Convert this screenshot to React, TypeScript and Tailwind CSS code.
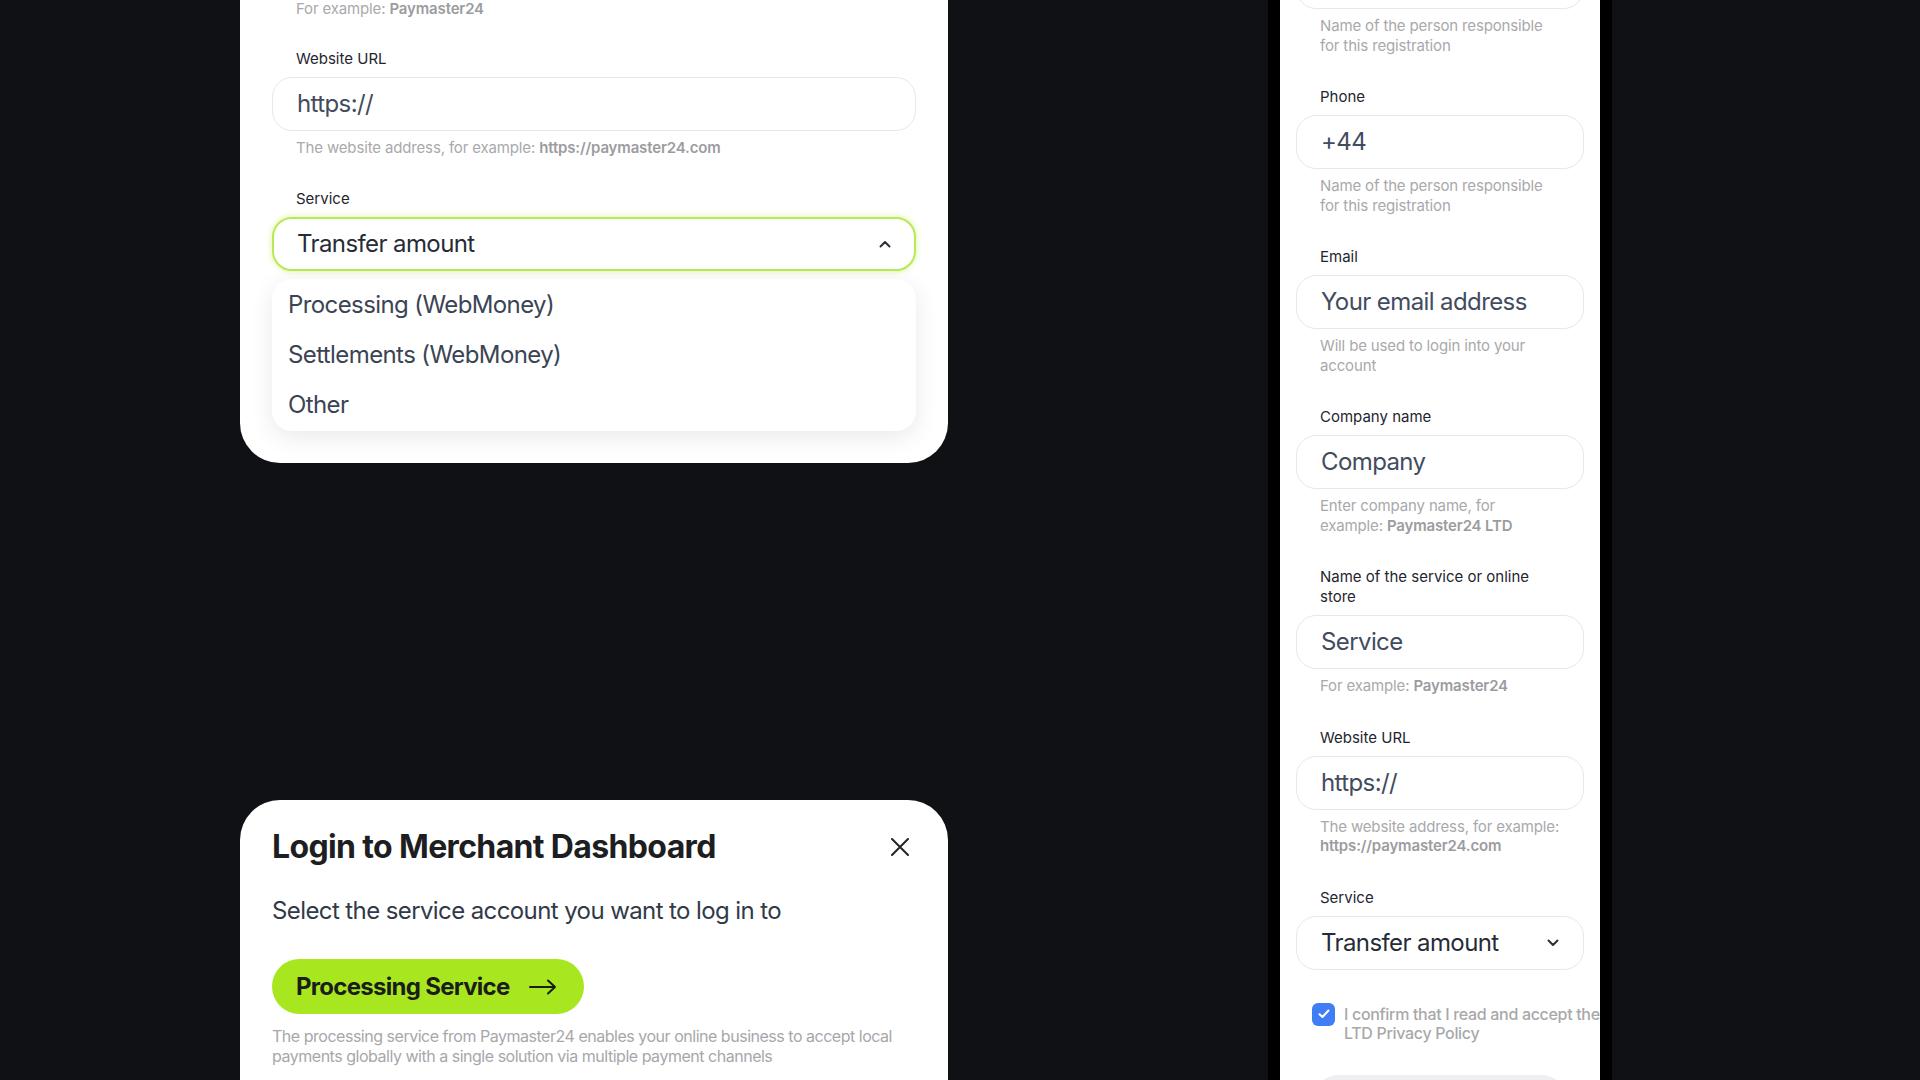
import type { ReactNode } from "react";

function Label({ children }: { children: ReactNode }) {
    return <div className="px-6 text-[15px] leading-5 text-[#1f2530]">{children}</div>;
}

function Hint({ children, first }: { children: ReactNode; first?: boolean }) {
    return (
        <div
            className={`${first ? "" : "mt-[7px]"} whitespace-nowrap px-6 text-[15px] leading-[19.5px] tracking-[-0.01em] text-[#a9a9ac]`}
        >
            {children}
        </div>
    );
}

function Em({ children }: { children: ReactNode }) {
    return <span className="font-semibold text-[#9c9c9f]">{children}</span>;
}

function Input({ value, noTop }: { value: string; noTop?: boolean }) {
    return (
        <div
            className={`${noTop ? "" : "mt-2"} flex h-[54px] items-center rounded-[20px] border border-[#e8e8eb] bg-white px-6 text-[24px] tracking-tight text-[#424c5e]`}
        >
            {value}
        </div>
    );
}

function Chevron({ up }: { up?: boolean }) {
    return (
        <svg width="12" height="8" viewBox="0 0 12 8" fill="none" className="shrink-0">
            <path
                d={up ? "M1.5 6.5 6 2l4.5 4.5" : "M1.5 1.5 6 6l4.5-4.5"}
                stroke="#2a303a"
                strokeWidth="2"
                strokeLinecap="round"
                strokeLinejoin="round"
            />
        </svg>
    );
}

function Select({ value, open }: { value: string; open?: boolean }) {
    return (
        <div
            className={
                open
                    ? "mt-2 flex h-[54px] items-center justify-between rounded-[20px] border-2 border-[#b9ea55] bg-white pl-[23px] pr-[23px] text-[24px] tracking-tight text-[#262c37] shadow-[0_0_6px_rgba(170,230,40,0.45)]"
                    : "mt-2 flex h-[54px] items-center justify-between rounded-[20px] border border-[#e8e8eb] bg-white pl-6 pr-[24px] text-[24px] tracking-tight text-[#262c37]"
            }
        >
            <span>{value}</span>
            <Chevron up={open} />
        </div>
    );
}

function Group({ children, first }: { children: ReactNode; first?: boolean }) {
    return <div className={first ? "" : "mt-8"}>{children}</div>;
}

function TopCard() {
    return (
        <div className="w-[708px] shrink-0 rounded-b-[40px] bg-white px-8 pb-8">
            <div className="-mt-px">
                <Hint first>
                    For example: <Em>Paymaster24</Em>
                </Hint>
            </div>
            <div className="-mt-[2px]">
                <Group>
                    <Label>Website URL</Label>
                    <Input value="https://" />
                    <Hint>
                        The website address, for example: <Em>https://paymaster24.com</Em>
                    </Hint>
                </Group>
            </div>
            <Group>
                <Label>Service</Label>
                <Select value="Transfer amount" open />
                <div className="mt-2 rounded-[20px] bg-white py-[1px] shadow-[0_6px_24px_rgba(0,0,0,0.09)]">
                    {["Processing (WebMoney)", "Settlements (WebMoney)", "Other"].map((o) => (
                        <div key={o} className="flex h-[50px] items-center px-4 text-[24px] tracking-tight text-[#3b4454]">
                            {o}
                        </div>
                    ))}
                </div>
            </Group>
        </div>
    );
}

function LoginCard() {
    return (
        <div className="mt-[337px] h-[320px] w-[708px] shrink-0 rounded-t-[40px] bg-white px-8 pt-[27px]">
            <div className="flex items-center justify-between">
                <h1 className="text-[32px] font-bold leading-10 tracking-[-0.02em] text-[#1d1e22]">
                    Login to Merchant Dashboard
                </h1>
                <svg width="18" height="18" viewBox="0 0 18 18" className="mr-[7px]">
                    <path d="M1 1l16 16M17 1 1 17" stroke="#22252b" strokeWidth="2" strokeLinecap="round" />
                </svg>
            </div>
            <p className="mt-7 text-[24px] leading-8 tracking-tight text-[#313a48]">
                Select the service account you want to log in to
            </p>
            <button className="mt-8 flex h-[55px] w-[312px] items-center gap-[19px] rounded-full bg-[#a8e61f] pl-6 text-[24px] font-bold tracking-[-0.03em] text-[#1b1d1a]">
                Processing Service
                <svg width="28" height="16" viewBox="0 0 28 16" fill="none">
                    <path d="M1 8h25M19 1.5 26 8l-7 6.5" stroke="#1b1d1a" strokeWidth="2" strokeLinecap="round" strokeLinejoin="round" />
                </svg>
            </button>
            <p className="mt-3 whitespace-nowrap text-[16px] leading-5 tracking-[-0.03em] text-[#a7a7aa]">
                The processing service from Paymaster24 enables your online business to accept local
                <br />
                payments globally with a single solution via multiple payment channels
            </p>
        </div>
    );
}

function PhoneForm() {
    return (
        <div className="ml-[320px] h-full w-[344px] shrink-0 bg-black px-3">
            <div className="h-full w-[320px] overflow-hidden bg-white">
                <div className="-mt-[45px] px-4">
                    <Group first>
                        <Input value="" noTop />
                        <Hint>
                            Name of the person responsible
                            <br />
                            for this registration
                        </Hint>
                    </Group>
                    <Group>
                        <Label>Phone</Label>
                        <Input value="+44" />
                        <Hint>
                            Name of the person responsible
                            <br />
                            for this registration
                        </Hint>
                    </Group>
                    <Group>
                        <Label>Email</Label>
                        <Input value="Your email address" />
                        <Hint>
                            Will be used to login into your
                            <br />
                            account
                        </Hint>
                    </Group>
                    <Group>
                        <Label>Company name</Label>
                        <Input value="Company" />
                        <Hint>
                            Enter company name, for
                            <br />
                            example: <Em>Paymaster24 LTD</Em>
                        </Hint>
                    </Group>
                    <Group>
                        <Label>
                            Name of the service or online
                            <br />
                            store
                        </Label>
                        <Input value="Service" />
                        <Hint>
                            For example: <Em>Paymaster24</Em>
                        </Hint>
                    </Group>
                    <Group>
                        <Label>Website URL</Label>
                        <Input value="https://" />
                        <Hint>
                            The website address, for example:
                            <br />
                            <Em>https://paymaster24.com</Em>
                        </Hint>
                    </Group>
                    <Group>
                        <Label>Service</Label>
                        <Select value="Transfer amount" />
                    </Group>
                    <div className="mt-[33px] flex items-start gap-[9px] pl-4">
                        <div className="flex h-[23px] w-[23px] shrink-0 items-center justify-center rounded-[6px] bg-[#3f7ef4]">
                            <svg width="12" height="10" viewBox="0 0 12 10" fill="none">
                                <path d="M1.5 5.2 4.5 8l6-6.5" stroke="white" strokeWidth="2" strokeLinecap="round" strokeLinejoin="round" />
                            </svg>
                        </div>
                        <div className="mt-[2px] whitespace-nowrap text-[16px] font-medium leading-[19px] tracking-[-0.02em] text-[#a8a8ab]">
                            I confirm that I read and accept the Paymaster24
                            <br />
                            LTD Privacy Policy
                        </div>
                    </div>
                    <div className="mx-4 mt-8 h-[54px] rounded-full bg-[#efeff1]" />
                </div>
            </div>
        </div>
    );
}

export default function App() {
    return (
        <div className="flex h-[1080px] w-[1920px] overflow-hidden bg-[#101115] font-['Inter',sans-serif]">
            <div className="ml-[240px] flex h-full flex-col">
                <TopCard />
                <LoginCard />
            </div>
            <PhoneForm />
        </div>
    );
}
